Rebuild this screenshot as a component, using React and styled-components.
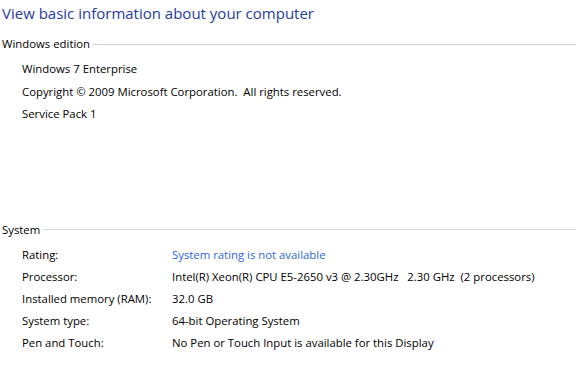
import React from "react";
import styled, { createGlobalStyle } from "styled-components";

const GlobalStyle = createGlobalStyle`
  html, body {
    margin: 0;
    padding: 0;
    background: #ffffff;
  }
  body {
    font-family: "Open Sans", "Noto Sans", sans-serif;
    font-size: 11.35px;
    color: #000000;
  }
`;

const Page = styled.div`
  width: 576px;
  height: 365px;
  overflow: hidden;
  padding: 0 0 0 2px;
  box-sizing: border-box;
`;

const Title = styled.h1`
  margin: 0;
  padding-top: 1px;
  height: 33px;
  font-size: 15px;
  font-weight: 400;
  color: #1e3c9e;
  line-height: 24px;
`;

const Section = styled.section`
  display: flex;
  flex-direction: column;
  margin-top: ${(p) => p.$top || 0}px;
`;

const SectionHeader = styled.div`
  display: flex;
  align-items: center;
  gap: 3px;
  height: 20px;
  line-height: 20px;

  &::after {
    content: "";
    flex: 1;
    height: 1px;
    background: #d5d5d5;
  }
`;

const Rows = styled.div`
  display: flex;
  flex-direction: column;
  padding: 4px 0 0 20px;
`;

const Row = styled.div`
  display: grid;
  grid-template-columns: 150px 1fr;
  height: 22px;
  line-height: 22px;
  white-space: pre;
`;

const Value = styled.span`
  color: ${(p) => (p.$link ? "#2a6ad6" : "#000000")};
`;

const EditionLine = styled.div`
  height: 22.5px;
  line-height: 22.5px;
  white-space: pre;
`;

const systemRows = [
  { label: "Rating:", value: "System rating is not available", link: true },
  {
    label: "Processor:",
    value: "Intel(R) Xeon(R) CPU E5-2650 v3 @ 2.30GHz   2.30 GHz  (2 processors)",
  },
  { label: "Installed memory (RAM):", value: "32.0 GB" },
  { label: "System type:", value: "64-bit Operating System" },
  {
    label: "Pen and Touch:",
    value: "No Pen or Touch Input is available for this Display",
  },
];

export default function App() {
  return (
    <>
      <GlobalStyle />
      <Page>
        <Title>View basic information about your computer</Title>
        <Section>
          <SectionHeader>Windows edition</SectionHeader>
          <Rows>
            <EditionLine>Windows 7 Enterprise</EditionLine>
            <EditionLine>Copyright © 2009 Microsoft Corporation.  All rights reserved.</EditionLine>
            <EditionLine>Service Pack 1</EditionLine>
          </Rows>
        </Section>
        <Section $top={94}>
          <SectionHeader>System</SectionHeader>
          <Rows>
            {systemRows.map((r) => (
              <Row key={r.label}>
                <span>{r.label}</span>
                <Value $link={r.link}>{r.value}</Value>
              </Row>
            ))}
          </Rows>
        </Section>
      </Page>
    </>
  );
}
